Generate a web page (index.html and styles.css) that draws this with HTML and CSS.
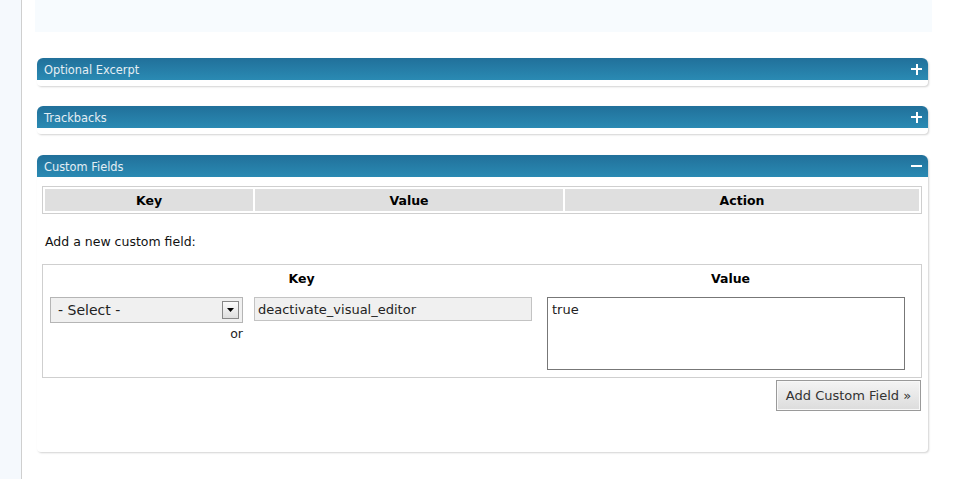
FILE: index.html
```html
<!DOCTYPE html>
<html>
<head>
<meta charset="utf-8">
<link rel="stylesheet" href="styles.css">
</head>
<body>
<div class="layout">
  <aside class="sidebar"></aside>
  <main class="main">
    <div class="topbox"></div>

    <section class="postbox closed">
      <h3 class="hndle"><span class="title">Optional Excerpt</span><span class="toggle plus"></span></h3>
      <div class="inside"></div>
    </section>

    <section class="postbox closed">
      <h3 class="hndle"><span class="title">Trackbacks</span><span class="toggle plus"></span></h3>
      <div class="inside"></div>
    </section>

    <section class="postbox open">
      <h3 class="hndle"><span class="title">Custom Fields</span><span class="toggle minus"></span></h3>
      <div class="inside">
        <table class="list">
          <thead>
            <tr><th class="c-key">Key</th><th class="c-val">Value</th><th class="c-act">Action</th></tr>
          </thead>
        </table>
        <p class="add-label">Add a new custom field:</p>
        <div class="newmeta">
          <div class="nm-head">
            <div class="nm-key">Key</div>
            <div class="nm-val">Value</div>
          </div>
          <div class="nm-row">
            <div class="nm-select-col">
              <div class="select"><span>- Select -</span><span class="arrow"><svg width="7" height="4" viewBox="0 0 7 4"><path d="M0 0H7L3.5 4Z" fill="#000"/></svg></span></div>
              <div class="or">or</div>
            </div>
            <div class="input">deactivate_visual_editor</div>
            <div class="textarea">true</div>
          </div>
        </div>
        <div class="submit-row">
          <button class="button">Add Custom Field »</button>
        </div>
      </div>
    </section>
  </main>
</div>
</body>
</html>
```

FILE: styles.css
```css
* { box-sizing: border-box; }
html, body { margin: 0; padding: 0; background: #fff; }
body {
  font-family: "DejaVu Sans", Verdana, sans-serif;
  font-size: 12px;
  color: #222;
  height: 479px;
  overflow: hidden;
}
.layout { display: flex; min-height: 479px; }
.sidebar {
  width: 22px;
  flex: 0 0 22px;
  background: #f5f9fd;
  border-right: 1px solid #cfcfcf;
}
.main {
  flex: 1;
  padding: 0 27px 0 13px;
}
.topbox {
  height: 32px;
  background: #f7fbfe;
}
.postbox {
  margin: 26px 4px 0 2px;
  background: #fff;
  border-radius: 6px 6px 4px 4px;
  box-shadow: 1px 1px 2px rgba(0,0,0,0.18);
}
.postbox + .postbox { margin-top: 20px; }
.postbox + .postbox.open { margin-top: 21px; }
.hndle {
  margin: 0;
  height: 22px;
  display: flex;
  align-items: center;
  justify-content: space-between;
  padding: 1px 6px 0 7px;
  border-radius: 6px 6px 0 0;
  background: linear-gradient(#21709a, #2a8ab3);
  color: #e4eef4;
  font-weight: normal;
  font-size: 11.4px;
}
.toggle { position: relative; width: 11px; height: 11px; display: block; margin-top: -1px; }
.toggle::before, .toggle::after {
  content: "";
  position: absolute;
  background: #fff;
}
.plus::before { left: 0; top: 4px; width: 11px; height: 2px; }
.plus::after { left: 4.5px; top: 0; width: 2px; height: 11px; }
.minus::before { left: 0; top: 4px; width: 11px; height: 2px; }
.minus::after { display: none; }
.closed .inside { height: 6px; }
.open .inside { padding: 9px 6px 41px 5px; }

.list {
  width: 100%;
  border: 1px solid #cfcfcf;
  border-spacing: 2px;
  table-layout: fixed;
}
.list th {
  height: 22px;
  background: #dfdfdf;
  font-size: 12.5px;
  font-weight: bold;
  color: #000;
  padding: 1px 0 0;
}
.c-key { width: 208px; }
.c-val { width: 308px; }

.add-label {
  margin: 19px 0 0 3px;
  height: 31px;
  line-height: 17px;
  font-size: 12.5px;
  color: #111;
}
.newmeta {
  border: 1px solid #cfcfcf;
  padding: 6px 16px 7px 7px;
}
.nm-head {
  display: flex;
  height: 25px;
  align-items: flex-start;
  line-height: 16px;
  font-weight: bold;
  color: #000;
  font-size: 12.5px;
}
.nm-key { width: 497px; text-align: center; padding-left: 6px; }
.nm-val { flex: 1; text-align: center; padding-left: 9px; }
.nm-row { display: flex; align-items: flex-start; margin-top: 1px; }
.nm-select-col { width: 193px; display: flex; flex-direction: column; align-items: flex-end; }
.select {
  width: 193px;
  height: 26px;
  background: #f0f0f0;
  border: 1px solid #b5b5b5;
  display: flex;
  align-items: center;
  justify-content: space-between;
  padding: 0 3px 0 7px;
  font-size: 14px;
  color: #222;
}
.arrow {
  width: 17px;
  height: 18px;
  border: 1px solid #888;
  background: linear-gradient(#fbfbfb, #dedede);
  display: flex;
  align-items: center;
  justify-content: center;
}
.or { margin-top: 3px; font-size: 12.5px; color: #222; }
.input {
  margin-left: 11px;
  width: 278px;
  height: 24px;
  background: #f0f0f0;
  border: 1px solid #c3c3c3;
  padding: 0 3px;
  display: flex;
  align-items: center;
  font-size: 13px;
  color: #222;
}
.textarea {
  margin-left: 15px;
  width: 358px;
  height: 73px;
  border: 1px solid #777;
  background: #fff;
  padding: 4px 4px;
  font-size: 13px;
  color: #222;
}
.submit-row { display: flex; justify-content: flex-end; margin: 2px 1px 0 0; }
.button {
  width: 145px;
  height: 31px;
  font-family: "DejaVu Sans", Verdana, sans-serif;
  font-size: 13px;
  color: #333;
  border: 1px solid #9a9a9a;
  box-shadow: inset 0 0 0 1px #f8f8f8;
  background: linear-gradient(#f4f4f4, #dcdcdc);
  padding: 0;
}
```
